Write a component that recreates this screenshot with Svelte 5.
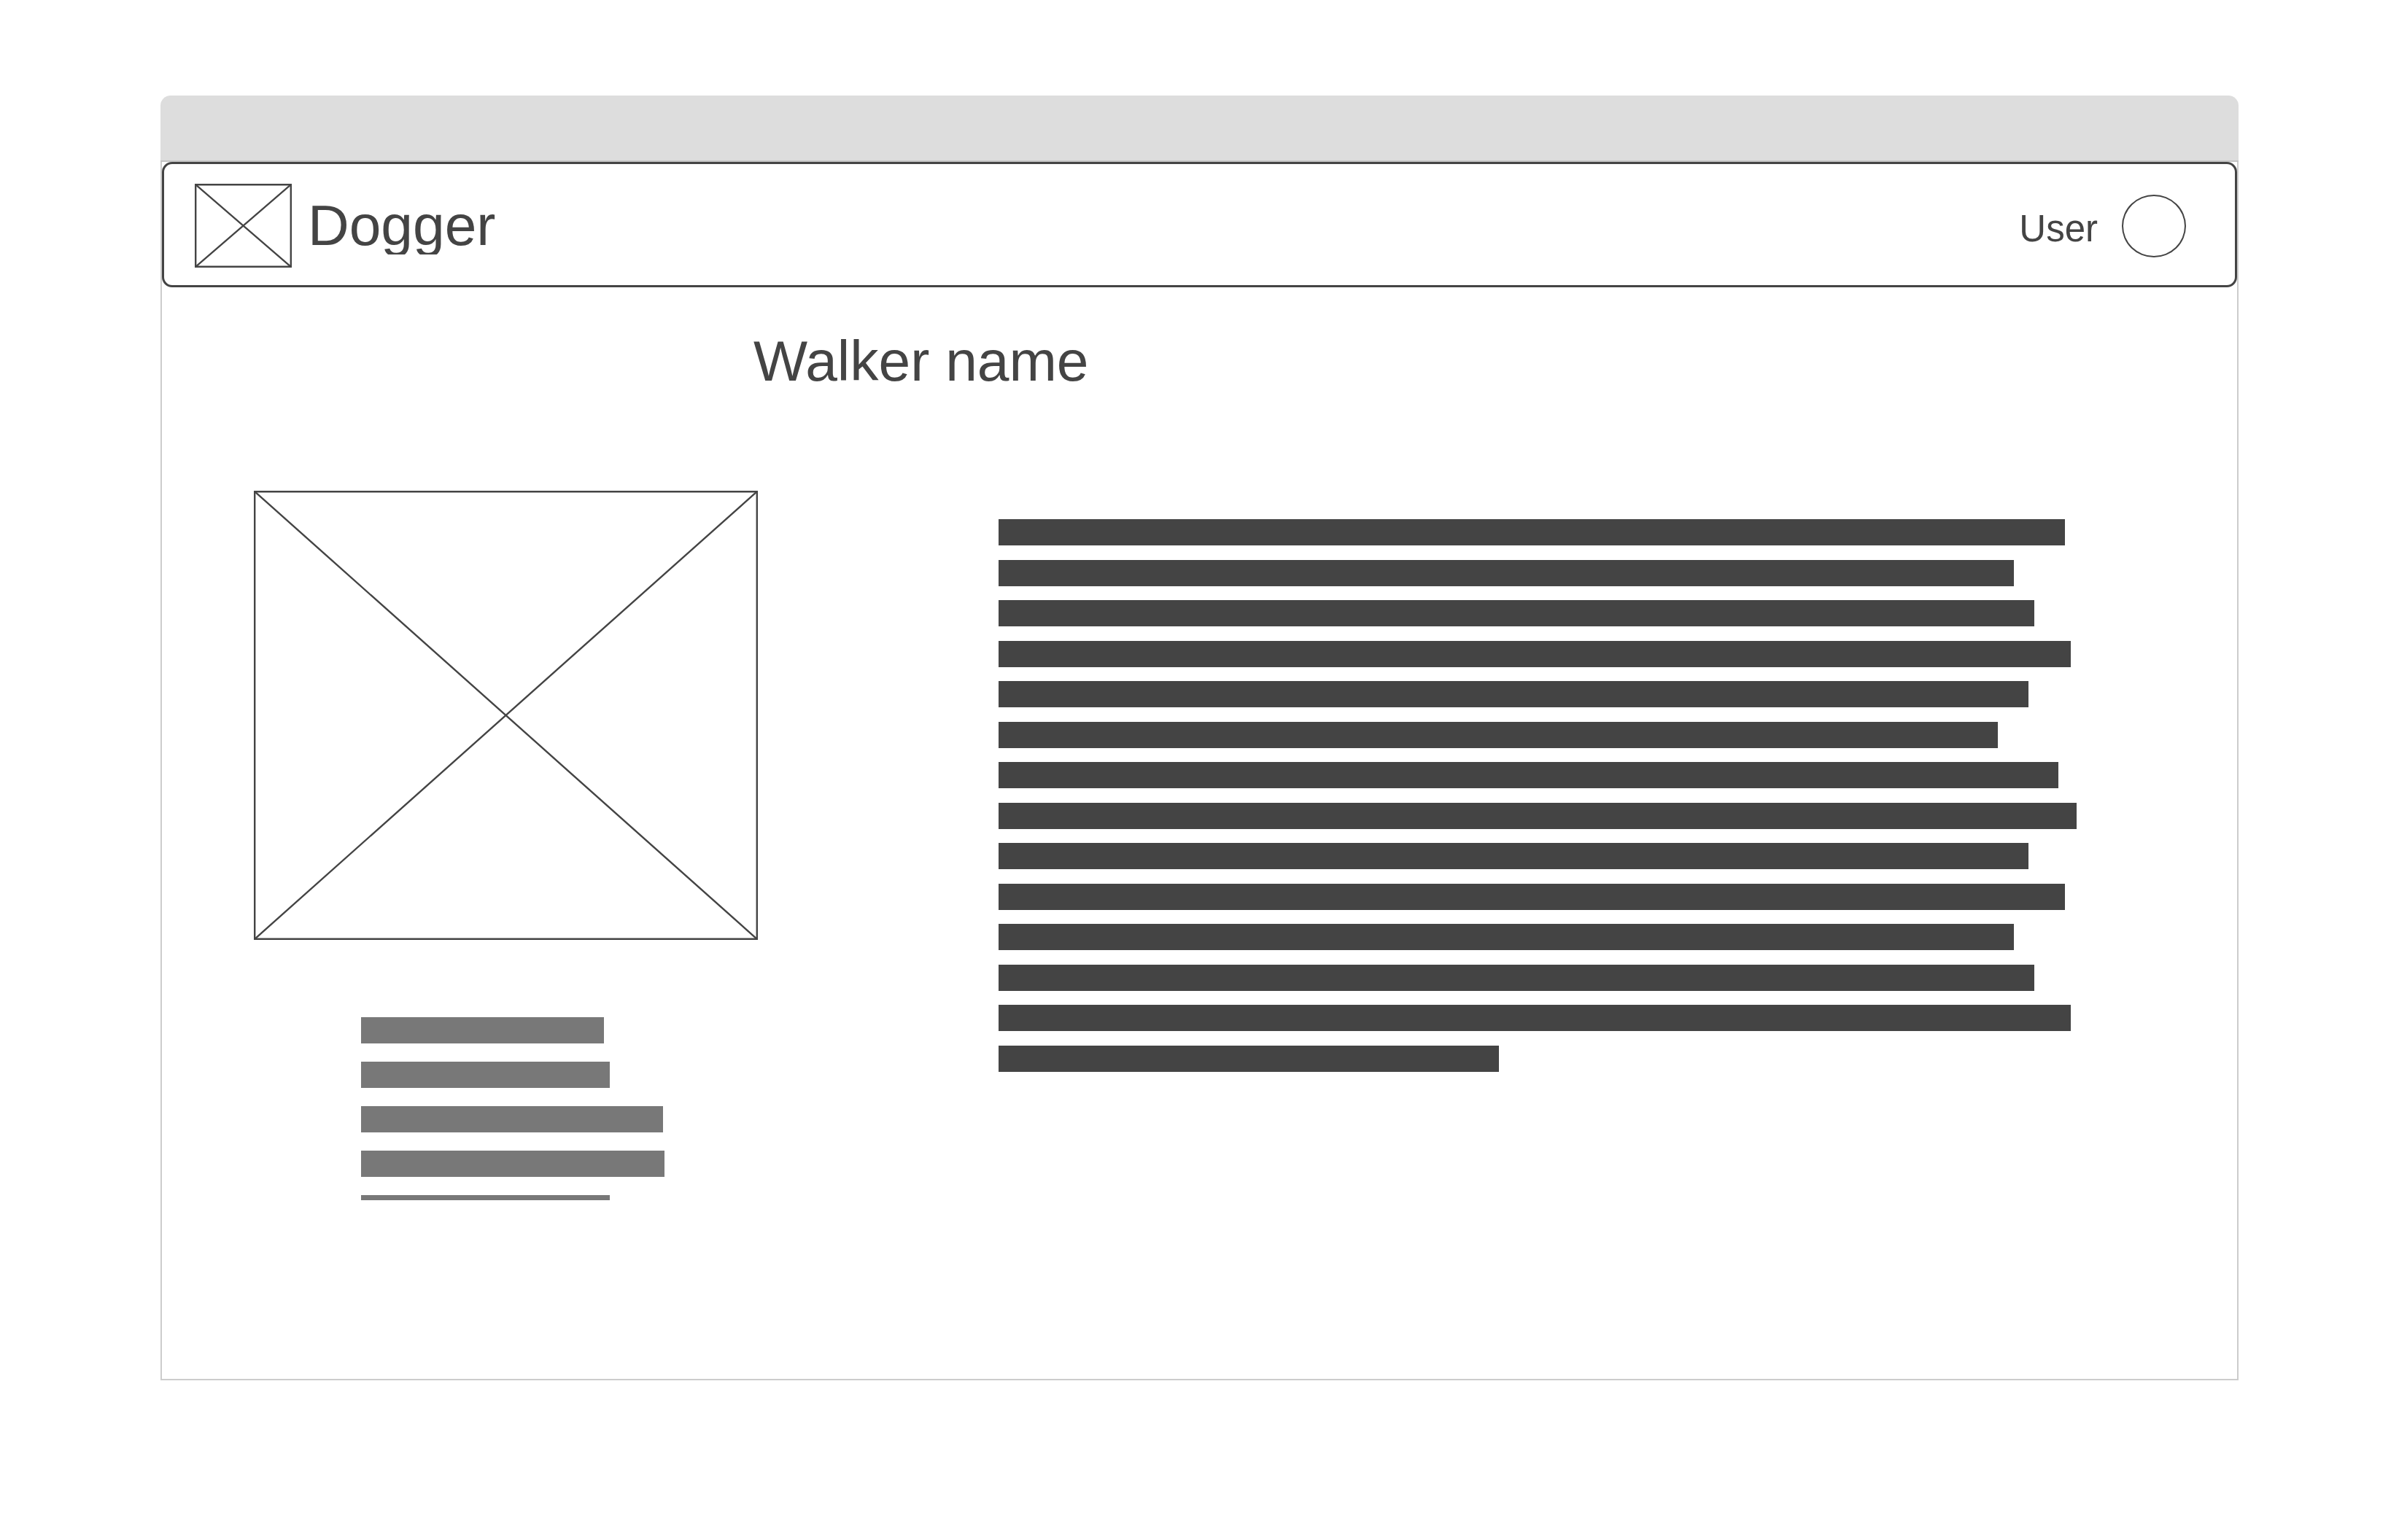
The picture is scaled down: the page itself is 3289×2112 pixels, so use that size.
<script>
  const infoBars = [333, 341, 414, 416, 341];
  const textBars = [1462, 1392, 1420, 1470, 1412, 1370, 1453, 1478, 1412, 1462, 1392, 1420, 1470, 686];
</script>

<div class="page">
  <div class="window">
    <div class="titlebar"></div>
    <div class="window-body">
      <header class="navbar">
        <div class="brand">
          <svg class="logo" viewBox="0 0 133 115" preserveAspectRatio="none" aria-hidden="true">
            <rect x="1.2" y="1.2" width="130.6" height="112.6" />
            <path d="M1.2 1.2 131.8 113.8M131.8 1.2 1.2 113.8" />
          </svg>
          <span class="brand-name">Dogger</span>
        </div>
        <div class="user">
          <span class="user-name">User</span>
          <span class="avatar"></span>
        </div>
      </header>
      <main class="content">
        <h1>Walker name</h1>
        <div class="columns">
          <section class="left">
            <svg class="photo" viewBox="0 0 691 616" preserveAspectRatio="none" aria-hidden="true">
              <rect x="1.2" y="1.2" width="688.6" height="613.6" />
              <path d="M1.2 1.2 689.8 614.8M689.8 1.2 1.2 614.8" />
            </svg>
            <div class="info">
              {#each infoBars as width, i}
                <div class="info-bar" class:cut={i === infoBars.length - 1} style="width: {width}px"></div>
              {/each}
            </div>
          </section>
          <section class="text">
            {#each textBars as width}
              <div class="text-bar" style="width: {width}px"></div>
            {/each}
          </section>
        </div>
      </main>
    </div>
  </div>
</div>

<style>
  :global(body) {
    margin: 0;
    background: #fff;
  }
  .page {
    padding: 131px 220px 0;
    width: 2849px;
    height: 1981px;
    font-family: "Liberation Sans", Arial, sans-serif;
    color: #444;
  }
  .window {
    width: 2849px;
  }
  .titlebar {
    height: 89px;
    background: #ddd;
    border-bottom: 2px solid #c4c4c4;
    border-radius: 14px 14px 0 0;
  }
  .window-body {
    box-sizing: border-box;
    height: 1671px;
    border: solid #ccc;
    border-width: 0 2px 2px;
  }
  .navbar {
    display: flex;
    align-items: center;
    justify-content: space-between;
    box-sizing: border-box;
    height: 172px;
    padding: 0 67px 0 42px;
    background: #fff;
    border: 3px solid #444;
    border-radius: 14px;
  }
  .brand {
    display: flex;
    align-items: center;
    gap: 22px;
  }
  .logo {
    display: block;
    width: 133px;
    height: 115px;
    margin-top: 3px;
  }
  svg rect,
  svg path {
    fill: none;
    stroke: #444;
    stroke-width: 2.4;
    vector-effect: non-scaling-stroke;
  }
  .brand-name {
    display: block;
    height: 82px;
    overflow: hidden;
    font-size: 78.5px;
    line-height: 84px;
  }
  .user {
    display: flex;
    align-items: center;
    gap: 33px;
    font-size: 51px;
  }
  .user-name {
    margin-top: 10px;
  }
  .avatar {
    display: block;
    box-sizing: border-box;
    width: 88px;
    height: 86px;
    margin-top: 4px;
    border: 2px solid #444;
    border-radius: 50%;
  }
  .content {
    padding: 0 0 0 126px;
  }
  h1 {
    margin: 56px 0 0 685px;
    font-size: 78.5px;
    font-weight: 400;
    line-height: 90px;
  }
  .columns {
    display: flex;
    margin-top: 133px;
  }
  .left {
    width: 1021px;
  }
  .photo {
    display: block;
    width: 691px;
    height: 616px;
  }
  .info {
    display: flex;
    flex-direction: column;
    gap: 25px;
    margin: 106px 0 0 147px;
  }
  .info-bar {
    height: 36px;
    background: #787878;
  }
  .info-bar.cut {
    height: 7px;
  }
  .text {
    display: flex;
    flex-direction: column;
    gap: 19.5px;
    padding-top: 39px;
  }
  .text-bar {
    height: 36px;
    background: #444;
  }
</style>
